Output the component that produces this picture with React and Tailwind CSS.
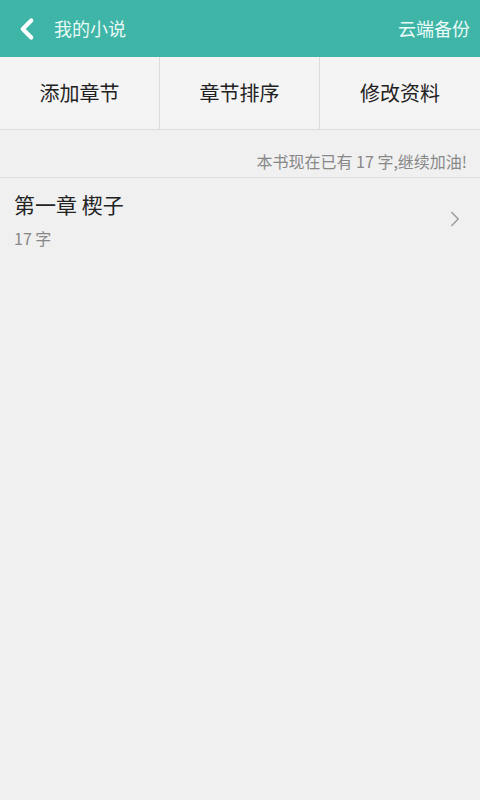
import { ChevronLeft, ChevronRight } from "lucide-react";

const actions = ["添加章节", "章节排序", "修改资料"];

export default function App() {
  return (
    <div
      className="w-[480px] h-[800px] bg-[#f0f0f0] flex flex-col"
      style={{ fontFamily: '"Noto Sans CJK SC", "Noto Sans", sans-serif' }}
    >
      <div className="h-[57px] bg-[#3eb5a7] flex items-center justify-between pl-[10px] pr-[10px] text-white">
        <div className="flex items-center">
          <ChevronLeft className="w-[34px] h-[34px]" strokeWidth={3} />
          <span className="ml-[10px] text-[18px] text-[#eafaf7]">我的小说</span>
        </div>
        <span className="text-[18px] text-[#eafaf7]">云端备份</span>
      </div>

      <div className="h-[73px] bg-[#f4f4f4] border-b border-[#dcdcdc] grid grid-cols-3">
        {actions.map((a, i) => (
          <div
            key={a}
            className={`flex items-center justify-center text-[20px] text-[#222] ${
              i < 2 ? "border-r border-[#dcdcdc]" : ""
            }`}
          >
            {a}
          </div>
        ))}
      </div>

      <div className="h-[48px] border-b border-[#dedede] flex items-center justify-end pr-[13px] pt-[14px] text-[16px] text-[#888]">
        本书现在已有 17 字,继续加油!
      </div>

      <div className="flex items-center justify-between pl-[14px] pr-[12px] pt-[10px]">
        <div className="flex flex-col">
          <span className="text-[21px] text-[#222] leading-[32px]">第一章 楔子</span>
          <span className="text-[16px] text-[#888] leading-[24px] mt-[6px]">17 字</span>
        </div>
        <ChevronRight className="w-[26px] h-[26px] text-[#9a9a9a]" strokeWidth={1.3} />
      </div>
    </div>
  );
}
